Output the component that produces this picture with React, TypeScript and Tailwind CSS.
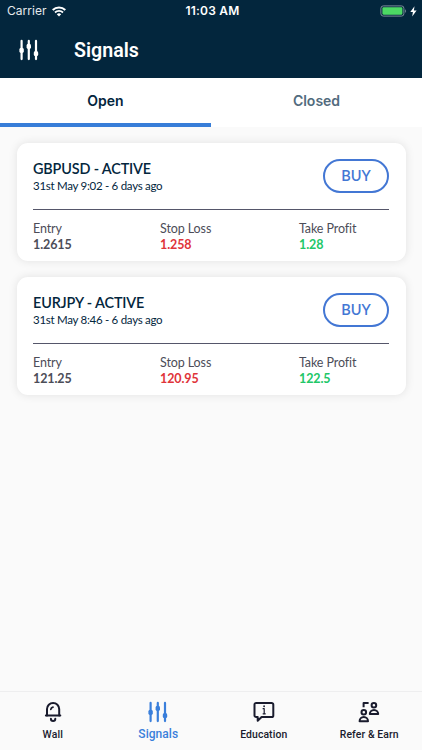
import React from 'react';
import clsx from 'clsx';

interface Signal {
  pair: string;
  status: string;
  date: string;
  entry: string;
  stopLoss: string;
  takeProfit: string;
}

const signals: Signal[] = [
  {
    pair: 'GBPUSD',
    status: 'ACTIVE',
    date: '31st May 9:02 - 6 days ago',
    entry: '1.2615',
    stopLoss: '1.258',
    takeProfit: '1.28',
  },
  {
    pair: 'EURJPY',
    status: 'ACTIVE',
    date: '31st May 8:46 - 6 days ago',
    entry: '121.25',
    stopLoss: '120.95',
    takeProfit: '122.5',
  },
];

function SlidersIcon() {
  return (
    <svg width="20" height="22" viewBox="0 0 20 22" fill="currentColor">
      <rect x="1.5" y="0.8" width="2.2" height="20.4" rx="1.1" />
      <rect x="8.7" y="0.8" width="2.2" height="20.4" rx="1.1" />
      <rect x="15.9" y="0.8" width="2.2" height="20.4" rx="1.1" />
      <rect x="0.4" y="8.8" width="4.4" height="5.2" rx="1.7" />
      <rect x="7.6" y="4.8" width="4.4" height="5.2" rx="1.7" />
      <rect x="14.8" y="12" width="4.4" height="5.2" rx="1.7" />
    </svg>
  );
}

function BellIcon() {
  return (
    <svg width="20" height="22" viewBox="0 0 20 22" fill="none" stroke="currentColor" strokeWidth="2" strokeLinecap="round" strokeLinejoin="round">
      <path d="M4 14.4V8a6.1 6.1 0 0 1 12.2 0v6.4" />
      <path d="M2.9 14.6h14.4" />
      <path d="M7.8 8.4a2.8 2.8 0 0 1 2.2-2.3" strokeWidth="1.7" />
      <path d="M7.9 17.8a2.2 2.2 0 0 0 4.4 0" />
    </svg>
  );
}

function EducationIcon() {
  return (
    <svg width="22" height="22" viewBox="0 0 22 22" fill="none" stroke="currentColor" strokeWidth="2" strokeLinecap="round" strokeLinejoin="round">
      <path d="M3.2 1.9h15.4a1.7 1.7 0 0 1 1.7 1.7v10.8a1.7 1.7 0 0 1-1.7 1.7H8.6L4.7 19.8v-3.7H3.2a1.7 1.7 0 0 1-1.7-1.7V3.6a1.7 1.7 0 0 1 1.7-1.7Z" />
      <path d="M10.1 7.7h1.1v5M10.1 12.8h2.2" strokeWidth="1.2" />
      <path d="M11.1 5.2v.1" strokeWidth="1.8" />
    </svg>
  );
}

function ReferIcon() {
  return (
    <svg width="22" height="22" viewBox="0 0 22 22" fill="none" stroke="currentColor" strokeWidth="2" strokeLinecap="round" strokeLinejoin="round">
      <path d="M5.6 6.2V1.9h5" strokeLinecap="butt" />
      <circle cx="15.9" cy="4.3" r="2.3" />
      <path d="M11.8 13.1a4.2 4.2 0 0 1 8.4 0Z" />
      <circle cx="5.8" cy="11.3" r="2.3" />
      <path d="M1.6 20.2a4.2 4.2 0 0 1 8.4 0Z" />
    </svg>
  );
}

function StatusBar() {
  return (
    <div className="grid h-[22px] grid-cols-3 items-center pr-[5px] pl-[7px] font-['Inter',sans-serif] text-[12px] text-white">
      <div className="flex items-center gap-[5px]">
        <span className="tracking-[0.05px] opacity-90">Carrier</span>
        <svg width="14" height="11" viewBox="0 0 14 11" fill="none" stroke="currentColor">
          <path d="M.7 4a9 9 0 0 1 12.6 0" strokeWidth="2" />
          <path d="M3 6.5a5.7 5.7 0 0 1 8 0" strokeWidth="1.8" />
          <path d="M7 10.6 4.8 8.3a3.2 3.2 0 0 1 4.4 0Z" fill="currentColor" stroke="none" />
        </svg>
      </div>
      <span className="pl-px text-center font-semibold tracking-[0.2px]">11:03 AM</span>
      <div className="flex items-center justify-end gap-[3px]">
        <svg width="27" height="12" viewBox="0 0 27 12">
          <rect x="0.9" y="0.9" width="23" height="10.2" rx="2.4" fill="none" stroke="#7b8c99" />
          <rect x="2.4" y="2.3" width="20" height="7.4" rx="1.1" fill="#4cd964" />
          <path d="M25.2 4.2c1.2.4 1.2 3.2 0 3.6Z" fill="#7b8c99" />
        </svg>
        <svg width="7" height="11" viewBox="0 0 7 11" fill="currentColor">
          <path d="M4.5.3.3 6.1h2.6l-.7 4.5 4.4-6H3.9Z" />
        </svg>
      </div>
    </div>
  );
}

function SignalCard({ signal }: { signal: Signal }) {
  return (
    <div className="h-[118px] rounded-[11px] bg-white px-[16.5px] pt-4 font-['Lato',sans-serif] shadow-[0_0_10px_rgba(0,0,0,0.1)]">
      <div className="flex h-[51px] items-start justify-between border-b border-[#55566a]">
        <div className="pt-px text-[#03263d]">
          <div className="text-[14.4px] leading-[18px] font-semibold tracking-[-0.15px]">
            {signal.pair} - {signal.status}
          </div>
          <div className="text-[11.5px] leading-[16px] tracking-[-0.28px]">{signal.date}</div>
        </div>
        <button className="h-[34px] w-[66px] rounded-full border-2 border-[#4377d4] text-[14.5px] font-semibold text-[#4377d4]">
          BUY
        </button>
      </div>
      <div className="flex pt-[11px] text-[12.5px] leading-[16px] tracking-[-0.1px] text-[#4c4d58]">
        <div className="w-[127px]">
          <div>Entry</div>
          <div className="font-bold">{signal.entry}</div>
        </div>
        <div className="w-[139px]">
          <div>Stop Loss</div>
          <div className="font-bold text-[#df343a]">{signal.stopLoss}</div>
        </div>
        <div>
          <div>Take Profit</div>
          <div className="font-bold text-[#21c768]">{signal.takeProfit}</div>
        </div>
      </div>
    </div>
  );
}

interface NavItemProps {
  label: string;
  icon: React.ReactNode;
  active?: boolean;
}

function NavItem({ label, icon, active }: NavItemProps) {
  return (
    <div
      className={clsx(
        'flex flex-1 flex-col items-center pt-[9px]',
        active ? 'text-[#3a7fdb]' : 'text-[#191b2d]'
      )}
    >
      {icon}
      <span
        className={clsx(
          'font-medium whitespace-nowrap',
          active
            ? 'mt-1 text-[12px] leading-[14px] tracking-[0.05px]'
            : 'mt-[5px] text-[10.4px] leading-[14px] tracking-[0.1px]'
        )}
      >
        {label}
      </span>
    </div>
  );
}

export default function App() {
  return (
    <div className="flex h-[750px] w-[422px] flex-col overflow-hidden bg-[#fafafa] font-['Roboto',sans-serif]">
      <header className="h-[78px] bg-[#03263d] text-white">
        <StatusBar />
        <div className="flex h-[55px] items-center pl-[19px]">
          <SlidersIcon />
          <h1 className="mt-[2px] ml-[35px] text-[19.6px] font-semibold">Signals</h1>
        </div>
      </header>

      <div className="flex h-[49px] bg-white font-['Inter',sans-serif] text-[14px] font-semibold">
        <div className="flex w-[211px] items-center justify-center border-b-4 border-[#377dd8] text-[#03263d]">Open</div>
        <div className="flex w-[211px] items-center justify-center border-b-4 border-white text-[#526b7d]">Closed</div>
      </div>

      <main className="flex flex-1 flex-col gap-4 px-[16.5px] pt-4">
        {signals.map((signal) => (
          <SignalCard key={signal.pair} signal={signal} />
        ))}
      </main>

      <nav className="flex h-[59px] border-t border-[#eeeeef] bg-[#fafafa]">
        <NavItem label="Wall" icon={<BellIcon />} />
        <NavItem label="Signals" icon={<SlidersIcon />} active />
        <NavItem label="Education" icon={<EducationIcon />} />
        <NavItem label="Refer & Earn" icon={<ReferIcon />} />
      </nav>
    </div>
  );
}
